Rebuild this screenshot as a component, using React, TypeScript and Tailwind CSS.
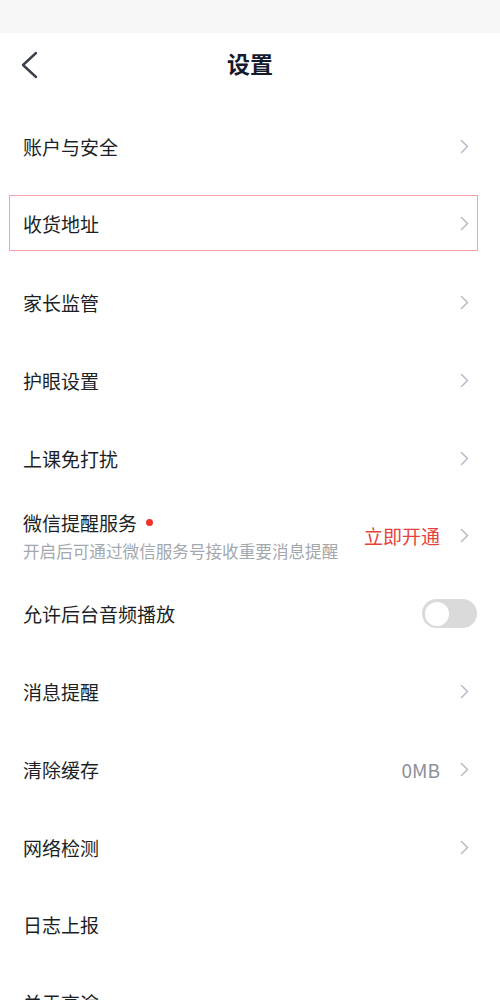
import React from "react";

const font = { fontFamily: '"Noto Sans CJK SC", "Noto Sans", sans-serif' };

function Chevron() {
  return (
    <svg width="9" height="15" viewBox="0 0 9 15" fill="none" className="shrink-0">
      <polyline points="1.5,1.5 7.5,7.5 1.5,13.5" stroke="#b6bac4" strokeWidth="1.5" strokeLinecap="round" strokeLinejoin="round" />
    </svg>
  );
}

type Row = { label: string; value?: string; chevron?: boolean; highlight?: boolean };

const rowsTop: Row[] = [
  { label: "账户与安全", chevron: true },
  { label: "收货地址", chevron: true, highlight: true },
  { label: "家长监管", chevron: true },
  { label: "护眼设置", chevron: true },
  { label: "上课免打扰", chevron: true },
];

const rowsBottom: Row[] = [
  { label: "消息提醒", chevron: true },
  { label: "清除缓存", value: "0MB", chevron: true },
  { label: "网络检测", chevron: true },
  { label: "日志上报" },
  { label: "关于高途" },
];

function SimpleRow({ r }: { r: Row }) {
  return (
    <div className="h-[77.8px] flex items-center">
      <div
        className={
          "mx-[9px] w-[469px] h-[56px] flex items-center pl-[13px] pr-[8px] border " +
          (r.highlight ? "border-[#f3a2a6] -mt-[3px]" : "border-transparent")
        }
      >
        <span className="flex-1 text-[19px] text-[#1c1f26] leading-none">{r.label}</span>
        {r.value && <span className="text-[19px] text-[#8b909a] leading-none mr-[20px]">{r.value}</span>}
        {r.chevron && <Chevron />}
      </div>
    </div>
  );
}

export default function App() {
  return (
    <div className="w-[500px] h-[1000px] overflow-hidden bg-white" style={font}>
      <div className="h-[33px] bg-[#f7f7f7]" />
      <div className="h-[60px] relative flex items-center justify-center">
        <div className="absolute left-[21px] top-[18px]">
          <svg width="17" height="28" viewBox="0 0 17 28" fill="none">
            <polyline points="15,2 2,14 15,26" stroke="#3a3f4a" strokeWidth="2.4" strokeLinecap="round" strokeLinejoin="round" />
          </svg>
        </div>
        <span className="text-[23px] font-bold text-[#151a2d] leading-none">设置</span>
      </div>
      <div className="pt-[15px]">
        {rowsTop.map((r) => (
          <SimpleRow key={r.label} r={r} />
        ))}
        <div className="h-[77.8px] flex items-center">
          <div className="mx-[9px] w-[469px] h-[56px] flex items-center pl-[13px] pr-[8px] border border-transparent">
            <div className="flex-1 flex flex-col">
              <div className="flex items-center">
                <span className="text-[19px] text-[#1c1f26] leading-none">微信提醒服务</span>
                <span className="ml-[9px] w-[7px] h-[7px] rounded-full bg-[#f0332a]" />
              </div>
              <span className="mt-[11px] text-[16.6px] text-[#a3a7ae] leading-none whitespace-nowrap">
                开启后可通过微信服务号接收重要消息提醒
              </span>
            </div>
            <span className="text-[19px] text-[#e8413a] leading-none mr-[20px]">立即开通</span>
            <Chevron />
          </div>
        </div>
        <div className="h-[77.8px] flex items-center">
          <div className="mx-[9px] w-[469px] h-[56px] flex items-center pl-[14px] pr-[1px]">
            <span className="flex-1 text-[19px] text-[#1c1f26] leading-none">允许后台音频播放</span>
            <div className="w-[55px] h-[29px] rounded-full bg-[#dadada] flex items-center px-[2.5px]">
              <div className="w-[24px] h-[24px] rounded-full bg-white" />
            </div>
          </div>
        </div>
        {rowsBottom.map((r) => (
          <SimpleRow key={r.label} r={r} />
        ))}
      </div>
    </div>
  );
}
